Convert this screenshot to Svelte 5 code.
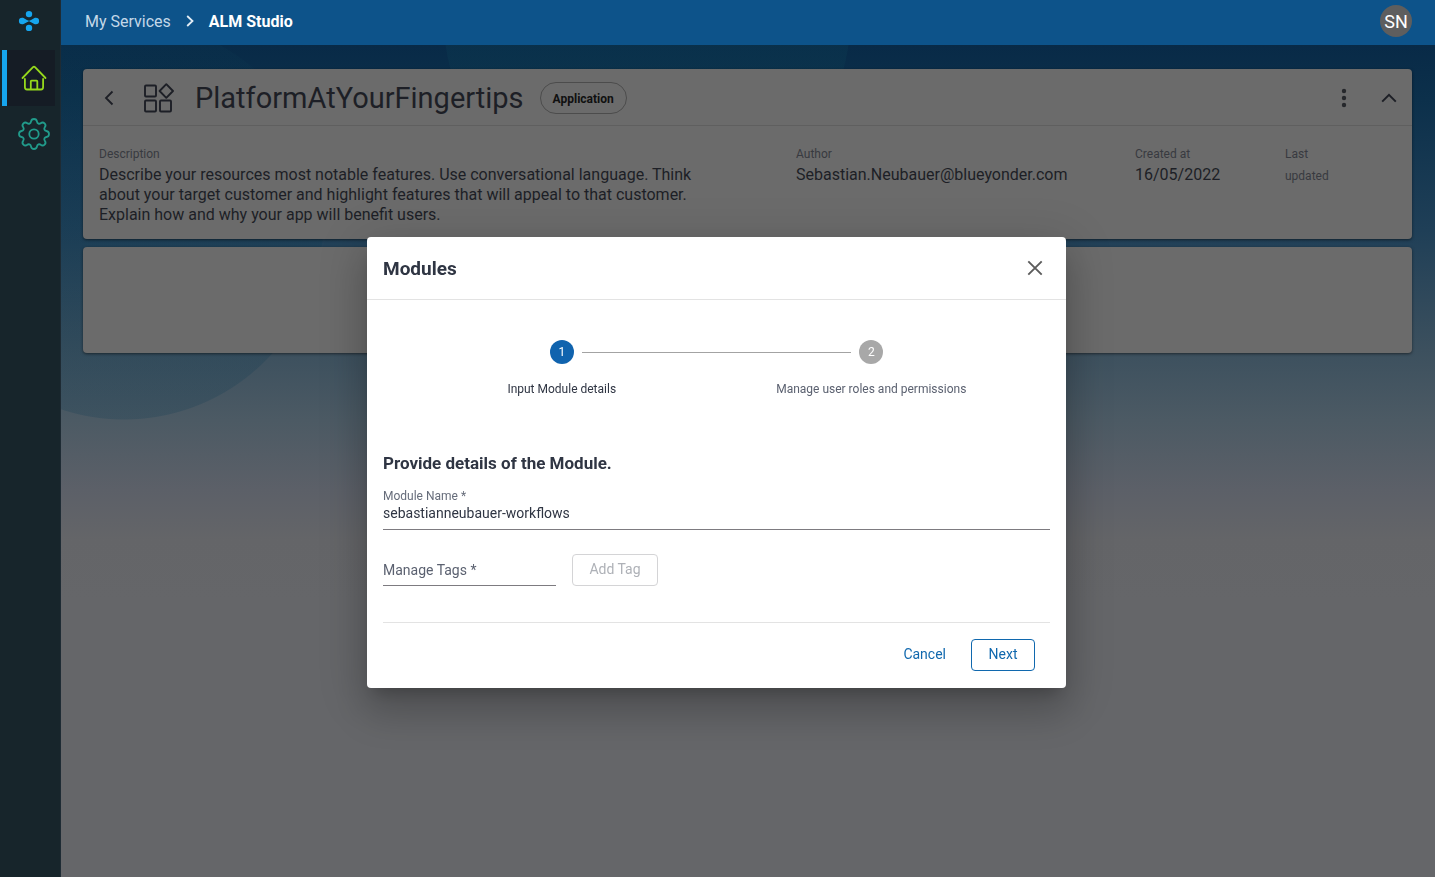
<script>
  let moduleName = $state('sebastianneubauer-workflows');
  let tag = $state('');
</script>

<div class="app">
  <nav class="rail" aria-label="Main">
    <a class="logo" href="#top" aria-label="Start">
      <svg width="22" height="22" viewBox="0 0 22 22" fill="#16a5ee">
        <circle cx="11" cy="4.100" r="3.200" />
        <circle cx="11" cy="17.900" r="3.200" />
        <path d="M4.200 7.700C6.500 7.700 7 9.500 10.700 10.600V11.400C7 12.500 6.500 14.300 4.200 14.300A3.300 3.300 0 0 1 4.200 7.700Z" />
        <path d="M17.800 7.700C15.500 7.700 15 9.500 11.300 10.600V11.400C15 12.500 15.500 14.300 17.800 14.300A3.300 3.300 0 0 0 17.800 7.700Z" />
      </svg>
    </a>
    <a class="item active" href="#home" aria-label="Home">
      <svg width="26" height="26" viewBox="0 0 26 26" fill="none" stroke="#96d91c" stroke-width="1.8" stroke-linecap="round" stroke-linejoin="round">
        <path d="M1.5 13L12 2.2Q13 1.3 14 2.2L24.500 13" />
        <path d="M3.900 14V22.300Q3.900 24.500 6 24.500H20Q22.100 24.500 22.100 22.300V14" />
        <path d="M9.800 24V16.300Q9.800 15.600 10.500 15.600H15.600Q16.300 15.600 16.300 16.300V24" />
      </svg>
    </a>
    <a class="item" href="#settings" aria-label="Settings">
      <svg width="32" height="32" viewBox="0 0 32 32" fill="none" stroke="#219b8b" stroke-width="1.8" stroke-linejoin="round">
        <circle cx="16" cy="16" r="4.700" />
        <path d="M13 3.600Q13.400 1 16 1Q18.600 1 19 3.600C19.300 5.600 21.300 6.300 22.700 5.200Q24.800 3.600 26.600 5.400Q28.400 7.200 26.800 9.300C25.700 10.700 26.400 12.700 28.400 13Q31 13.400 31 16Q31 18.600 28.400 19C26.400 19.300 25.700 21.300 26.800 22.700Q28.400 24.800 26.600 26.600Q24.800 28.400 22.700 26.800C21.300 25.700 19.300 26.400 19 28.400Q18.600 31 16 31Q13.400 31 13 28.400C12.700 26.400 10.700 25.700 9.300 26.800Q7.200 28.400 5.400 26.600Q3.600 24.800 5.200 22.700C6.300 21.300 5.600 19.300 3.600 19Q1 18.600 1 16Q1 13.400 3.600 13C5.600 12.700 6.300 10.700 5.200 9.300Q3.600 7.200 5.400 5.400Q7.200 3.600 9.300 5.200C10.700 6.300 12.700 5.600 13 3.600Z" />
      </svg>
    </a>
  </nav>

  <div class="page">
    <header class="topbar">
      <nav class="crumbs" aria-label="Breadcrumb">
        <a href="#services">My Services</a>
        <svg width="8" height="12" viewBox="0 0 8 12" fill="none" stroke="#e3edf5" stroke-width="1.8"><path d="M1.200 1L6.500 6L1.200 11" /></svg>
        <strong>ALM Studio</strong>
      </nav>
      <button class="avatar">SN</button>
    </header>

    <main class="content">
      <section class="card">
        <div class="card-head">
          <button class="icon-btn" aria-label="Back">
            <svg width="10" height="16" viewBox="0 0 10 16" fill="none" stroke="#1d1f26" stroke-width="1.8"><path d="M8.500 1.500L2 8L8.500 14.500" /></svg>
          </button>
          <svg class="app-icon" width="30" height="30" viewBox="0 0 30 30" fill="none" stroke="#1d1f26" stroke-width="1.900" stroke-linejoin="round">
            <rect x="1" y="2.500" width="11" height="11" rx="1" />
            <rect x="1" y="17.500" width="11" height="11" rx="1" />
            <rect x="16" y="17.500" width="11" height="11" rx="1" />
            <path d="M22.300 1.200L29 8L22.300 14.800L15.600 8Z" />
          </svg>
          <h1>PlatformAtYourFingertips</h1>
          <span class="chip">Application</span>
          <button class="icon-btn more" aria-label="More actions">
            <svg width="6" height="20" viewBox="0 0 6 20" fill="#26282c"><circle cx="3" cy="3" r="2.200" /><circle cx="3" cy="10" r="2.200" /><circle cx="3" cy="17" r="2.200" /></svg>
          </button>
          <button class="icon-btn" aria-label="Collapse">
            <svg width="16" height="10" viewBox="0 0 16 10" fill="none" stroke="#1d1f26" stroke-width="2"><path d="M1.200 8.600L8 1.800L14.800 8.600" /></svg>
          </button>
        </div>
        <dl class="facts">
          <div class="desc">
            <dt>Description</dt>
            <dd>Describe your resources most notable features. Use conversational language. Think about your target customer and highlight features that will appeal to that customer. Explain how and why your app will benefit users.</dd>
          </div>
          <div><dt>Author</dt><dd>Sebastian.Neubauer@blueyonder.com</dd></div>
          <div><dt>Created at</dt><dd>16/05/2022</dd></div>
          <div class="last"><dt>Last updated</dt></div>
        </dl>
      </section>
      <section class="card empty"></section>
    </main>
  </div>

  <div class="overlay">
    <div class="dialog" role="dialog" aria-modal="true" aria-labelledby="dialog-title">
      <div class="dialog-head">
        <h2 id="dialog-title">Modules</h2>
        <button class="icon-btn" aria-label="Close">
          <svg width="16" height="16" viewBox="0 0 16 16" fill="none" stroke="#5c5c5c" stroke-width="1.900"><path d="M1.300 1.300L14.700 14.700M14.700 1.300L1.300 14.700" /></svg>
        </button>
      </div>
      <ol class="steps">
        <li class="current"><span class="dot">1</span><span class="label">Input Module details</span></li>
        <li><span class="dot">2</span><span class="label">Manage user roles and permissions</span></li>
      </ol>
      <form onsubmit={(e) => e.preventDefault()}>
        <h3>Provide details of the Module.</h3>
        <div class="field">
          <label for="module-name">Module Name *</label>
          <input id="module-name" type="text" bind:value={moduleName} />
        </div>
        <div class="tags">
          <div class="tag-field">
            {#if !tag}<label for="module-tags">Manage Tags *</label>{/if}
            <input id="module-tags" type="text" bind:value={tag} />
          </div>
          <button type="button" class="btn" disabled={!tag}>Add Tag</button>
        </div>
        <div class="actions">
          <button type="button" class="btn text">Cancel</button>
          <button type="submit" class="btn outline">Next</button>
        </div>
      </form>
    </div>
  </div>
</div>

<style>
  :global(body) { margin: 0; }
  .app, .app * { box-sizing: border-box; }
  .app {
    display: flex;
    min-height: 100vh;
    font-family: Roboto, "Liberation Sans", sans-serif;
    color: #1d1f26;
  }
  h1, h2, h3, dl, dd, ol { margin: 0; padding: 0; }
  button { font: inherit; color: inherit; background: none; border: 0; padding: 0; }
  a { text-decoration: none; }
  svg { display: block; flex: none; }

  .rail { flex: none; width: 61px; background: #17252b; border-right: 1px solid #1e2b34; }
  .logo { display: flex; padding: 10px 0 0 18px; height: 50px; }
  .item { display: flex; align-items: center; justify-content: center; height: 56px; margin: 0 5px 0 2px; padding-left: 10px; }
  .item.active { background: #151c25; border-left: 5px solid #16a5ee; padding-left: 5px; }

  .page {
    flex: 1;
    min-width: 0;
    background:
      radial-gradient(circle 200px at 63px 220px, rgba(12, 56, 80, .22) 199px, transparent 200px),
      radial-gradient(circle 204px at 586px 16px, rgba(12, 60, 82, .35) 203px, transparent 204px),
      linear-gradient(#082a47 45px, #0c304b 100px, #1f3f57 230px, #3c505e 350px, #4c5a64 420px, #5c6068 490px, #646568 540px, #656669 600px);
  }
  .topbar { display: flex; align-items: center; justify-content: space-between; height: 45px; padding: 0 23px 3px 24px; background: #0d538a; }
  .crumbs { display: flex; align-items: center; gap: 15px; font-size: 16px; color: #fff; }
  .crumbs a { color: #c3d8e8; }
  .avatar { width: 32px; height: 32px; border-radius: 50%; background: #5e5e5e; color: #fff; font-size: 18px; }

  .content { display: flex; flex-direction: column; gap: 8px; padding: 24px 23px 24px 22px; }
  .card { background: #6b6b6b; border-radius: 4px; box-shadow: 0 1px 3px rgba(0, 0, 0, .5); }
  .card-head { display: flex; align-items: center; height: 57px; padding: 2px 15px 0 18px; border-bottom: 1px solid #5f5f5f; }
  .app-icon { margin: 0 21px 0 27px; }
  .icon-btn { display: flex; align-items: center; justify-content: center; flex: none; min-width: 16px; height: 32px; }
  h1 { font-size: 29px; font-weight: 400; line-height: 36px; }
  .chip { margin-left: 16px; padding: 0 12px; border: 1px solid #4c4c4c; border-radius: 16px; font-size: 12px; font-weight: 700; line-height: 32px; color: #101010; height: 32px; }
  .more { margin: 0 29px 0 auto; }
  .facts { display: grid; grid-template-columns: 697fr 339fr 150fr 111fr; padding: 17px 16px 14px; }
  .desc { padding-right: 80px; }
  dt { font-size: 12px; line-height: 22px; color: #383a40; }
  dd { font-size: 16px; line-height: 20px; }
  .last { width: 50px; }
  .empty { height: 106px; }

  .overlay { position: fixed; inset: 45px 0 0; display: flex; align-items: center; justify-content: center; padding: 3px 2px 0 0; }
  .dialog {
    width: 699px; max-width: 100%; background: #fff; color: #2f3543; border-radius: 4px;
    box-shadow: 0 11px 15px -7px rgba(0, 0, 0, .2), 0 24px 38px 3px rgba(0, 0, 0, .14), 0 9px 46px 8px rgba(0, 0, 0, .12);
  }
  .dialog-head { display: flex; align-items: center; justify-content: space-between; height: 63px; padding: 0 23px 0 16px; border-bottom: 1px solid #e3e3e3; }
  h2 { font-size: 19px; font-weight: 700; }
  .steps { display: grid; grid-template-columns: 1fr 1fr; list-style: none; padding: 40px 40px 0; }
  .steps li { position: relative; display: flex; flex-direction: column; align-items: center; gap: 16px; color: #5b6170; font-size: 12px; line-height: 18px; }
  .steps .current { color: #2f3543; }
  .steps .current::after { content: ""; position: absolute; top: 12px; left: calc(50% + 20px); width: calc(100% - 40px); border-top: 1px solid #a3a3a3; }
  .dot { width: 24px; height: 24px; border-radius: 50%; background: #a8a8a8; color: #fff; text-align: center; line-height: 24px; }
  .current .dot { background: #1063ae; }
  form { padding: 53px 16px 17px; }
  h3 { font-size: 17px; font-weight: 700; line-height: 24px; }
  .field { display: flex; flex-direction: column; margin-top: 13px; }
  .field label { font-size: 12px; line-height: 16px; color: #666c7a; }
  input { font: inherit; font-size: 14px; color: #2f3543; background: none; border: 0; border-bottom: 1px solid #7d7b80; border-radius: 0; outline: 0; padding: 0; }
  .field input { height: 26px; padding-bottom: 8px; }
  .tags { display: flex; gap: 16px; margin-top: 24px; }
  .tag-field { display: grid; width: 173px; }
  .tag-field label, .tag-field input { grid-area: 1 / 1; min-width: 0; }
  .tag-field input { height: 32px; }
  .tag-field label { font-size: 14px; line-height: 32px; color: #5b6170; }
  .btn { height: 32px; padding: 0 16px 2px; border: 1px solid #d4d4d6; border-radius: 4px; font-size: 14px; }
  .btn:disabled { color: #aeb1b7; min-width: 86px; }
  .actions { display: flex; justify-content: flex-end; gap: 8px; margin-top: 36px; padding: 16px 15px 0; border-top: 1px solid #e3e3e3; }
  .btn.text { border-color: transparent; color: #1068ae; }
  .btn.outline { border-color: #1068ae; color: #1068ae; min-width: 64px; }
</style>
